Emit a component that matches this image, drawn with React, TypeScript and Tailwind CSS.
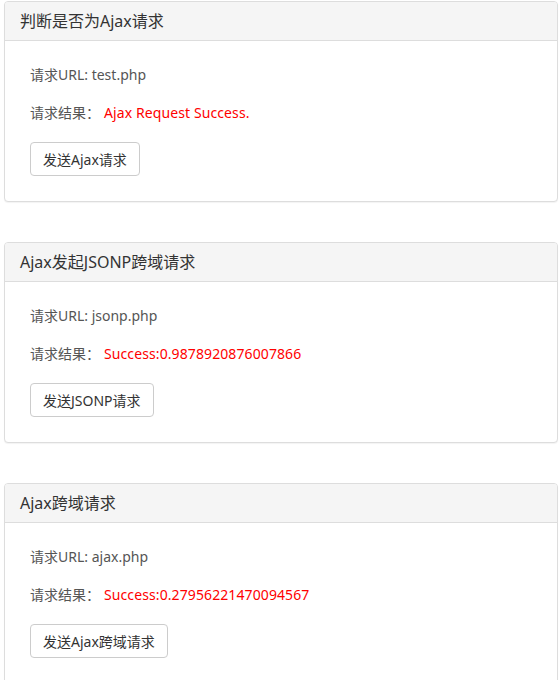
const panels = [
  { title: '判断是否为Ajax请求', url: 'test.php', result: 'Ajax Request Success.', button: '发送Ajax请求' },
  { title: 'Ajax发起JSONP跨域请求', url: 'jsonp.php', result: 'Success:0.9878920876007866', button: '发送JSONP请求' },
  { title: 'Ajax跨域请求', url: 'ajax.php', result: 'Success:0.27956221470094567', button: '发送Ajax跨域请求' },
];

export default function App() {
  return (
    <div
      className="min-h-[680px] bg-white pt-[1px] pl-[4px] pr-[2px] flex flex-col gap-[40px]"
      style={{ fontFamily: '"Noto Sans", "Noto Sans CJK SC", sans-serif' }}
    >
      {panels.map((p) => (
        <div key={p.title} className="border border-[#dddddd] rounded-[4px] shadow-[0_1px_1px_rgba(0,0,0,0.05)] bg-white">
          <div className="h-[39px] bg-[#f5f5f5] border-b border-[#dddddd] rounded-t-[3px] px-[15px] flex items-center text-[16px] text-[#333333]">
            {p.title}
          </div>
          <div className="pt-[24px] pb-[25px] px-[25px] text-[14px] text-[#555555]">
            <p className="leading-[20px]">请求URL: {p.url}</p>
            <p className="leading-[20px] mt-[18px]">
              请求结果：<span className="text-[#ff0000] ml-[4px] tracking-[0.1px]">{p.result}</span>
            </p>
            <button className="mt-[19px] h-[34px] px-[12px] border border-[#cccccc] rounded-[4px] bg-white text-[#333333] text-[14px]">
              {p.button}
            </button>
          </div>
        </div>
      ))}
    </div>
  );
}
